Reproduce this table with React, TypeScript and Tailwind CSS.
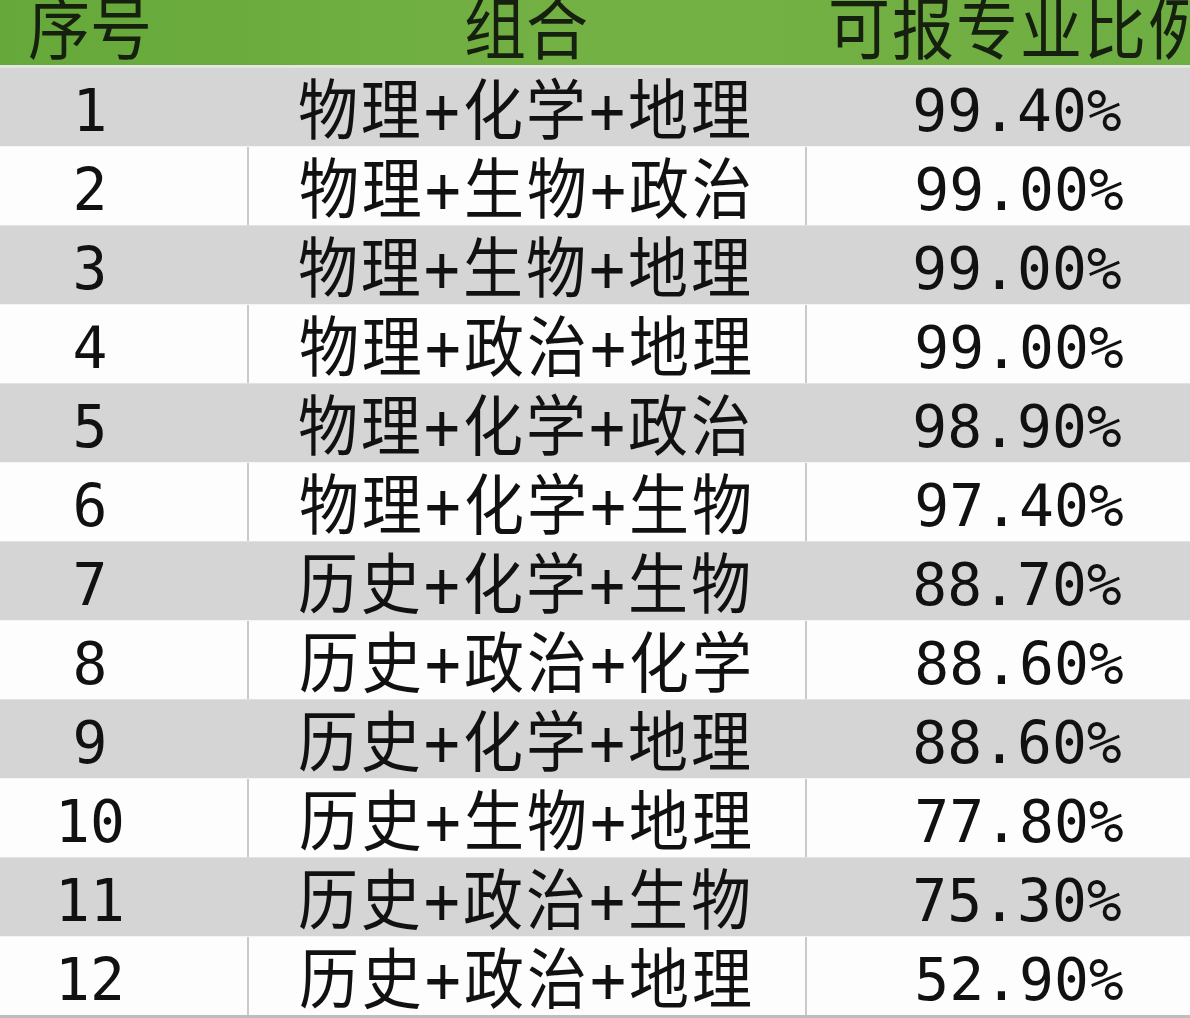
const rows = [
  { no: "1", combo: "物理+化学+地理", rate: "99.40%" },
  { no: "2", combo: "物理+生物+政治", rate: "99.00%" },
  { no: "3", combo: "物理+生物+地理", rate: "99.00%" },
  { no: "4", combo: "物理+政治+地理", rate: "99.00%" },
  { no: "5", combo: "物理+化学+政治", rate: "98.90%" },
  { no: "6", combo: "物理+化学+生物", rate: "97.40%" },
  { no: "7", combo: "历史+化学+生物", rate: "88.70%" },
  { no: "8", combo: "历史+政治+化学", rate: "88.60%" },
  { no: "9", combo: "历史+化学+地理", rate: "88.60%" },
  { no: "10", combo: "历史+生物+地理", rate: "77.80%" },
  { no: "11", combo: "历史+政治+生物", rate: "75.30%" },
  { no: "12", combo: "历史+政治+地理", rate: "52.90%" },
]

const font = "font-['DejaVu_Sans_Mono','Noto_Sans_CJK_SC',monospace]"

export default function App() {
  return (
    <div className={`w-[1190px] h-[1018px] overflow-hidden bg-[#bdbdbd] text-[#111] ${font}`}>
      <div className="grid grid-cols-[247px_558px_1fr] h-[65px] bg-gradient-to-r from-[#66a83a] via-[#74b145] to-[#6fae42] text-[62px] leading-none text-[#15200f]">
        <div className="w-[180px] flex justify-center items-center pb-1">
          <span className="scale-y-110">序号</span>
        </div>
        <div className="flex justify-center items-center pb-1">
          <span className="scale-y-110">组合</span>
        </div>
        <div className="w-[430px] flex justify-center items-center pb-1">
          <span className="scale-y-110 tracking-[2px]">可报专业比例</span>
        </div>
      </div>
      <div className="h-[2px] bg-[#e4e7e2]" />
      {rows.map((r, i) => {
        const gray = i % 2 === 0
        return (
          <div
            key={r.no}
            className={`grid grid-cols-[247px_558px_1fr] h-[79px] leading-none ${
              gray ? "bg-[#d5d5d5] border-t border-[#e2e2e2]" : "bg-[#fdfdfd] border-t border-[#f4f4f4]"
            }`}
          >
            <div className="w-[180px] flex justify-center items-center pt-2 text-[58px]">{r.no}</div>
            <div className={`flex justify-center items-center pt-2 ${gray ? "" : "border-l-2 border-[#cacaca]"}`}>
              <span className="text-[60px] tracking-[3px] scale-y-110">{r.combo}</span>
            </div>
            <div className={`${gray ? "" : "border-l-2 border-[#cacaca]"}`}>
              <div className="w-[424px] h-full flex justify-center items-center pt-2 text-[58px]">{r.rate}</div>
            </div>
          </div>
        )
      })}
    </div>
  )
}
